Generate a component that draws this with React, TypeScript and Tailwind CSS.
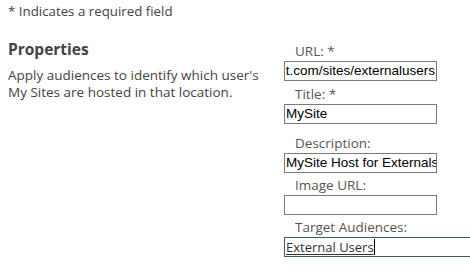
import React from "react";

const labelCls = "block pl-[11px] text-[13.5px] leading-4 text-[#555] font-['Open_Sans',sans-serif]";
const boxCls =
  "w-[153px] h-[20px] border border-[#7a7a7a] bg-white overflow-hidden whitespace-nowrap text-[13.5px] leading-[18px] text-black font-['Liberation_Sans',Arial,sans-serif] px-px";

export default function App() {
  return (
    <div className="w-[470px] h-[275px] bg-white overflow-hidden font-['Open_Sans',sans-serif] text-[#444]">
      <div className="pl-2 pt-[3px] text-[13.3px] leading-4">* Indicates a required field</div>
      <div className="flex">
        <div className="w-[284px] shrink-0 pl-2 pt-[20px]">
          <h2 className="text-[15.5px] leading-5 font-bold text-[#444]">Properties</h2>
          <p className="mt-[8px] text-[13.5px] leading-[17px] text-[#444]">
            Apply audiences to identify which user's
            <br />
            My Sites are hosted in that location.
          </p>
        </div>
        <div className="flex-1 pt-[24px] min-w-0">
          <label className={labelCls}>URL: *</label>
          <div className={`${boxCls} mt-[2px] flex justify-end`}>
            <span>t.com/sites/externalusers</span>
          </div>
          <label className={`${labelCls} mt-[5px]`}>Title: *</label>
          <div className={`${boxCls} mt-[2px]`}>MySite</div>
          <label className={`${labelCls} mt-[11px]`}>Description:</label>
          <div className={`${boxCls} mt-[2px]`}>MySite Host for Externals</div>
          <label className={`${labelCls} mt-[4px]`}>Image URL:</label>
          <div className={`${boxCls} mt-[2px]`}></div>
          <label className={`${labelCls} mt-[4px]`}>Target Audiences:</label>
          <div className="mt-[2px] h-[20px] w-[200px] border-t border-b border-l border-[#3b5a73] bg-white flex items-center pl-px">
            <span className="text-[13px] leading-4 text-[#333] underline underline-offset-2 font-['Open_Sans',sans-serif]">
              External Users
            </span>
            <span className="w-px h-[16px] bg-black"></span>
          </div>
        </div>
      </div>
    </div>
  );
}
